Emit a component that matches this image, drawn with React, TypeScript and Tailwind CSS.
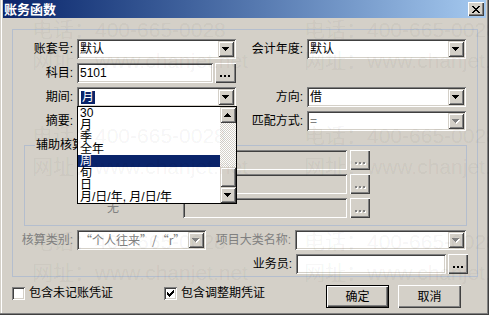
import type { ReactNode } from "react";

const sunken =
  "shadow-[inset_1px_1px_0_#808080,inset_-1px_-1px_0_#ffffff,inset_2px_2px_0_#404040,inset_-2px_-2px_0_#d4d0c8]";
const pushRaised = "shadow-[inset_1px_1px_0_#ffffff,inset_-1px_-1px_0_#404040,inset_-2px_-2px_0_#808080]";
const dropRaised =
  "shadow-[inset_1px_1px_0_#d4d0c8,inset_-1px_-1px_0_#404040,inset_2px_2px_0_#ffffff,inset_-2px_-2px_0_#808080]";
const frameLine = "border-[#b4bece]";

const periodItems = ["30", "月", "季", "全年", "周", "旬", "日", "月/日/年, 月/日/年"];

const watermarkSpots = [
  "left-[32px] top-[14px]",
  "left-[304px] top-[14px]",
  "left-[32px] top-[120px]",
  "left-[304px] top-[120px]",
  "left-[32px] top-[226px]",
  "left-[304px] top-[226px]"
];

function Arrow({ up = false, disabled = false }: { up?: boolean; disabled?: boolean }) {
  const rows = [7, 5, 3, 1];
  return (
    <svg height="5" shapeRendering="crispEdges" width="8">
      {disabled &&
        rows.map((w, i) => (
          <rect fill="#ffffff" height={1} key={`s${i}`} width={w} x={(7 - w) / 2 + 1} y={(up ? 3 - i : i) + 1} />
        ))}
      {rows.map((w, i) => (
        <rect
          fill={disabled ? "#808080" : "#000000"}
          height={1}
          key={i}
          width={w}
          x={(7 - w) / 2}
          y={up ? 3 - i : i}
        />
      ))}
    </svg>
  );
}

function DropButton({ disabled, up }: { disabled?: boolean; up?: boolean }) {
  return (
    <span className={`flex h-[16px] w-[16px] shrink-0 items-center justify-center bg-[#d4d0c8] ${dropRaised}`}>
      <Arrow disabled={disabled} up={up} />
    </span>
  );
}

function Combo({ children, className, disabled }: { children?: ReactNode; className: string; disabled?: boolean }) {
  return (
    <div className={`flex h-[20px] shrink-0 items-center bg-white p-[2px] ${sunken} ${className}`}>
      <div className="flex-1 overflow-hidden whitespace-nowrap pl-[1px] leading-[16px]">{children}</div>
      <DropButton disabled={disabled} />
    </div>
  );
}

function Field({ children, className, disabled }: { children?: ReactNode; className: string; disabled?: boolean }) {
  return (
    <div
      className={`flex h-[20px] shrink-0 items-center px-[3px] leading-none ${
        disabled ? "bg-[#d4d0c8]" : "bg-white"
      } ${sunken} ${className}`}
    >
      {children}
    </div>
  );
}

function Dots({ disabled }: { disabled?: boolean }) {
  return (
    <svg height="3" shapeRendering="crispEdges" width="11">
      {[0, 4, 8].map((x) => (
        <g key={x}>
          {disabled && <rect fill="#ffffff" height={2} width={2} x={x + 1} y={1} />}
          <rect fill={disabled ? "#808080" : "#000000"} height={2} width={2} x={x} y={0} />
        </g>
      ))}
    </svg>
  );
}

function DotsButton({ className, disabled }: { className: string; disabled?: boolean }) {
  return (
    <div className={`flex h-[20px] w-[20px] shrink-0 items-end justify-center bg-[#d4d0c8] pb-[5px] ${pushRaised} ${className}`}>
      <Dots disabled={disabled} />
    </div>
  );
}

function Label({ children, className, muted }: { children: ReactNode; className: string; muted?: boolean }) {
  return (
    <span className={`shrink-0 whitespace-nowrap text-right leading-none ${muted ? "text-[#808080]" : ""} ${className}`}>
      {children}
    </span>
  );
}

function Checkbox({ checked }: { checked?: boolean }) {
  const tick = [
    [6, 0, 1],
    [5, 1, 2],
    [0, 2, 1],
    [4, 2, 3],
    [0, 3, 2],
    [3, 3, 3],
    [0, 4, 5],
    [1, 5, 3],
    [2, 6, 1]
  ];
  return (
    <span className={`flex h-[13px] w-[13px] shrink-0 items-center justify-center bg-white ${sunken}`}>
      {checked && (
        <svg height="7" shapeRendering="crispEdges" width="7">
          {tick.map(([x, y, w]) => (
            <rect fill="#000000" height={1} key={`${x}-${y}`} width={w} x={x} y={y} />
          ))}
        </svg>
      )}
    </span>
  );
}

function PushButton({ children, isDefault }: { children: ReactNode; isDefault?: boolean }) {
  return (
    <button
      className={`flex h-[23px] w-[63px] shrink-0 items-center justify-center bg-[#d4d0c8] leading-none ${pushRaised} ${
        isDefault ? "border border-black" : ""
      }`}
      type="button"
    >
      {children}
    </button>
  );
}

function CloseButton() {
  const cross = [
    [0, 0, 2],
    [6, 0, 2],
    [1, 1, 2],
    [5, 1, 2],
    [2, 2, 4],
    [3, 3, 2],
    [2, 4, 4],
    [1, 5, 2],
    [5, 5, 2],
    [0, 6, 2],
    [6, 6, 2]
  ];
  return (
    <span className={`flex h-[14px] w-[16px] items-center justify-center bg-[#d4d0c8] ${pushRaised}`}>
      <svg height="7" shapeRendering="crispEdges" width="8">
        {cross.map(([x, y, w]) => (
          <rect fill="#000000" height={1} key={`${x}-${y}`} width={w} x={x} y={y} />
        ))}
      </svg>
    </span>
  );
}

function PeriodList() {
  return (
    <div className="absolute left-[77px] top-[106px] flex h-[98px] w-[160px] border border-black bg-white">
      <div className="flex-1 overflow-hidden">
        {periodItems.map((item) => (
          <div
            className={`h-[12px] whitespace-nowrap pl-[2px] leading-[12px] ${item === "周" ? "bg-[#0a246a] text-white" : ""}`}
            key={item}
          >
            {item}
          </div>
        ))}
      </div>
      <div className="flex w-[16px] flex-col">
        <DropButton up />
        <div className="h-[44px] bg-[image:repeating-conic-gradient(#d4d0c8_0_25%,#ffffff_0_50%)] bg-size-[2px_2px]" />
        <div className={`h-[20px] bg-[#d4d0c8] ${dropRaised}`} />
        <DropButton />
      </div>
    </div>
  );
}

export default function App() {
  return (
    <div
      className={`relative h-[315px] w-[489px] overflow-hidden bg-[#d4d0c8] px-[3px] font-['Liberation_Sans','Noto_Sans_CJK_SC',sans-serif] text-[12px] text-black shadow-[inset_-1px_-1px_0_#404040,inset_-2px_-2px_0_#808080,inset_1px_0_0_#d4d0c8,inset_2px_0_0_#ffffff]`}
    >
      <div className="flex h-[18px] items-center justify-between bg-linear-to-r from-[#0a246a] to-[#a6caf0] pl-[1px] pr-[2px]">
        <span className="text-[13px] font-bold leading-none text-white">账务函数</span>
        <CloseButton />
      </div>

      <div className="px-[9px] pt-[11px]">
        <div className={`flex h-[248px] w-[466px] flex-col border ${frameLine}`}>
          <div className="mt-[9px] flex h-[20px] items-center">
            <Label className="w-[60px]">账套号:</Label>
            <Combo className="ml-[4px] w-[159px]">默认</Combo>
            <Label className="w-[67px]">会计年度:</Label>
            <Combo className="ml-[4px] w-[159px]">默认</Combo>
          </div>

          <div className="mt-[4px] flex h-[20px] items-center">
            <Label className="w-[60px]">科目:</Label>
            <Field className="ml-[4px] w-[136px]">5101</Field>
            <DotsButton className="ml-[2px] w-[21px]" />
          </div>

          <div className="mt-[4px] flex h-[20px] items-center">
            <Label className="w-[60px]">期间:</Label>
            <Combo className="ml-[4px] w-[159px]">
              <span className="ml-[1px] inline-block bg-[#0a246a] px-[1px] leading-[13px] text-white">月</span>
            </Combo>
            <Label className="w-[67px]">方向:</Label>
            <Combo className="ml-[4px] w-[159px]">借</Combo>
          </div>

          <div className="mt-[4px] flex h-[20px] items-center">
            <Label className="w-[60px]">摘要:</Label>
            <Field className="ml-[4px] w-[159px]" />
            <Label className="w-[67px]">匹配方式:</Label>
            <Combo className="ml-[4px] w-[159px]" disabled>
              <span className="text-[#808080]">=</span>
            </Combo>
          </div>

          <div className={`relative ml-[11px] mt-[14px] flex h-[81px] w-[443px] flex-col gap-[4px] border pt-[4px] ${frameLine}`}>
            <span className="absolute left-[10px] top-[-8px] bg-[#d4d0c8] px-[1px] leading-[14px]">辅助核算</span>
            {["", "", "无"].map((name, index) => (
              <div className="flex h-[20px] items-center" key={index}>
                <span className="w-[158px] shrink-0 pl-[82px] leading-none text-[#808080]">{name}</span>
                <Field className="w-[164px]" disabled />
                <DotsButton className="ml-[3px]" disabled />
              </div>
            ))}
          </div>

          <div className="mt-[4px] flex h-[20px] items-center">
            <Label className="w-[60px]" muted>
              核算类别:
            </Label>
            <Combo className="ml-[4px] w-[129px]" disabled>
              <span className="font-['Noto_Sans_CJK_SC',sans-serif] text-[#808080]">“个人往来”/“r”</span>
            </Combo>
            <Label className="w-[85px]" muted>
              项目大类名称:
            </Label>
            <Combo className="ml-[4px] w-[171px]" disabled />
          </div>

          <div className="mt-[4px] flex h-[20px] items-center">
            <Label className="w-[279px]">业务员:</Label>
            <Field className="ml-[4px] w-[150px]" />
            <DotsButton className="ml-[2px]" />
          </div>
        </div>

        <div className="mt-[8px] flex items-start">
          <div className="mt-[2px] flex w-[152px] items-center gap-[4px]">
            <Checkbox />
            <span className="leading-[13px]">包含未记账凭证</span>
          </div>
          <div className="mt-[2px] flex w-[162px] items-center gap-[4px]">
            <Checkbox checked />
            <span className="leading-[13px]">包含调整期凭证</span>
          </div>
          <PushButton isDefault>确定</PushButton>
          <div className="ml-[9px]">
            <PushButton>取消</PushButton>
          </div>
        </div>
      </div>

      <PeriodList />

      {watermarkSpots.map((spot) => (
        <div
          className={`pointer-events-none absolute whitespace-nowrap text-[21px] leading-[31px] text-black/[0.055] ${spot}`}
          key={spot}
        >
          <div>电话：400-665-0028</div>
          <div>网址：www.chanjet.net</div>
        </div>
      ))}
    </div>
  );
}
